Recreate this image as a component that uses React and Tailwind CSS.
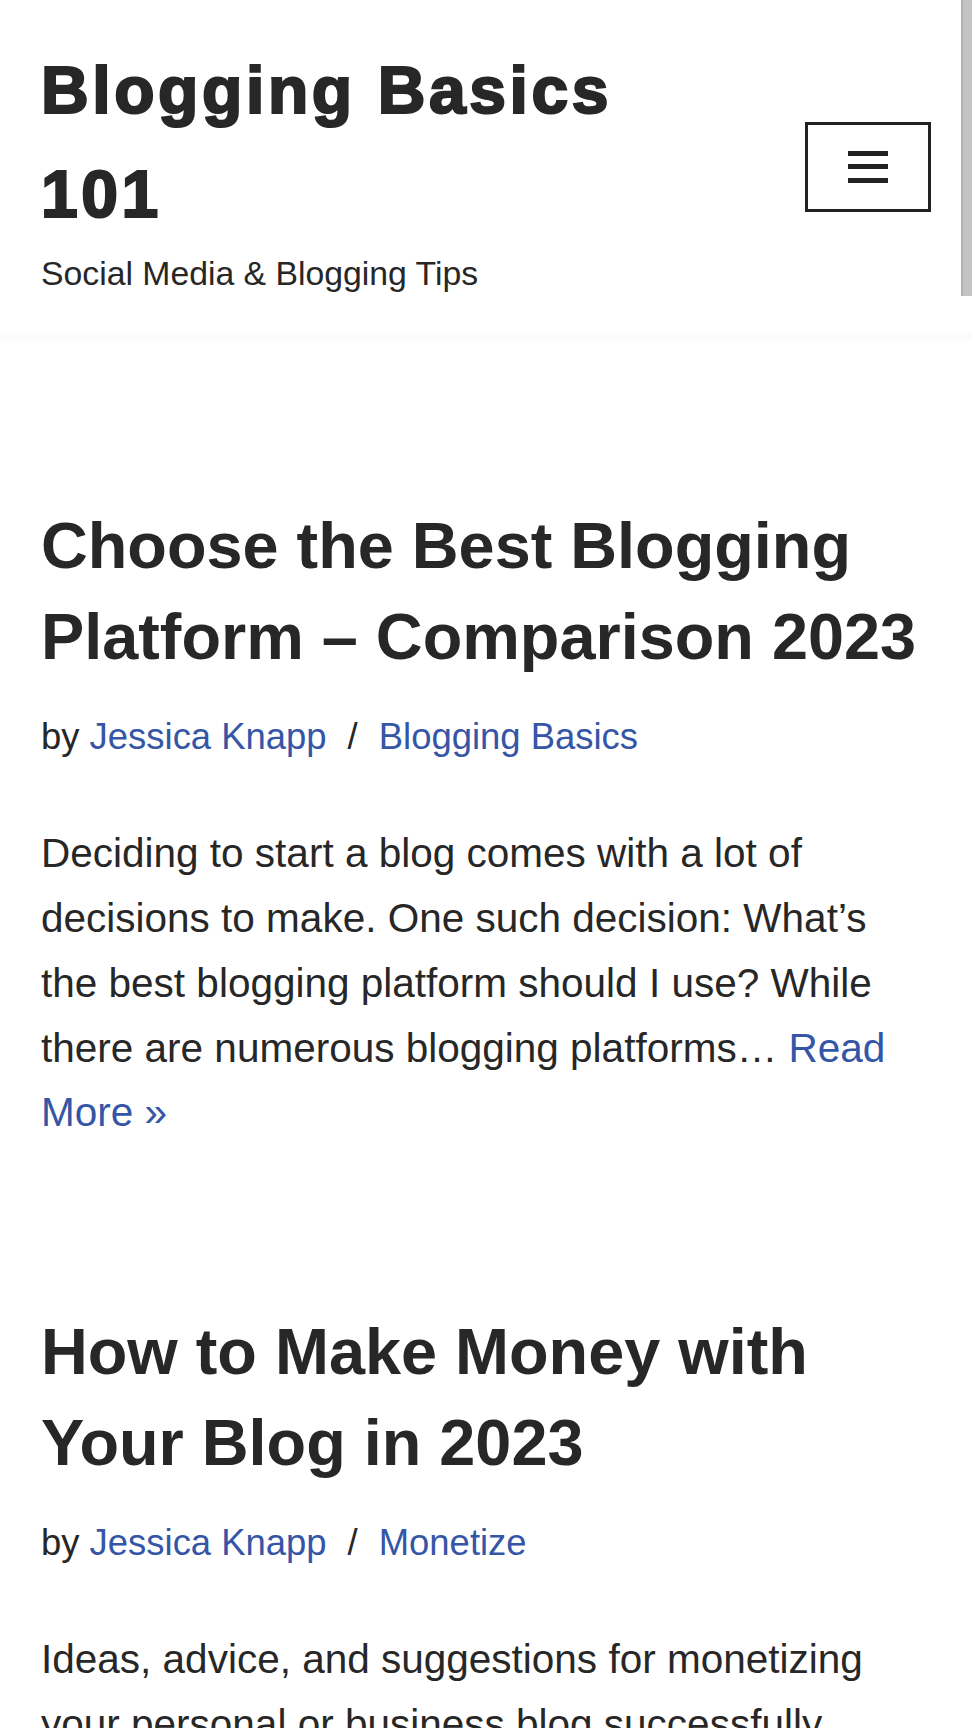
import React from 'react';

const posts = [
	{
		title: 'Choose the Best Blogging Platform – Comparison 2023',
		author: 'Jessica Knapp',
		category: 'Blogging Basics',
		excerpt:
			'Deciding to start a blog comes with a lot of decisions to make. One such decision: What’s the best blogging platform should I use? While there are numerous blogging platforms…',
	},
	{
		title: 'How to Make Money with Your Blog in 2023',
		author: 'Jessica Knapp',
		category: 'Monetize',
		excerpt:
			'Ideas, advice, and suggestions for monetizing your personal or business blog successfully. Learn which strategies work best and how to get started today…',
	},
];

const Header = () => {
	return (
		<header className="bg-white border-b-[8px] border-b-[#fbfbfb]">
			<div className="flex items-center justify-between px-[41px] pt-[39px] pb-[33px]">
				<div className="max-w-[620px]">
					<h1 className="text-[66px] leading-[103.7px] font-bold tracking-[3.6px] text-[#272727] [-webkit-text-stroke:2.2px_#272727]">
						Blogging Basics 101
					</h1>
					<p className="text-[33.75px] leading-[54px] text-[#272727]">Social Media &amp; Blogging Tips</p>
				</div>
				<button
					className="mb-[6px] w-[126px] h-[90px] border-[3px] border-[#222222] bg-white flex flex-col items-center justify-center gap-[8.5px]"
					aria-label="Navigation Menu"
				>
					<span className="block w-[40px] h-[5px] bg-[#222222]"></span>
					<span className="block w-[40px] h-[5px] bg-[#222222]"></span>
					<span className="block w-[40px] h-[5px] bg-[#222222]"></span>
				</button>
			</div>
		</header>
	);
};

const Post = ({ post }) => {
	return (
		<article className="pt-[160px]">
			<h2 className="text-[64.8px] leading-[90.7px] font-bold text-[#272727]">{post.title}</h2>
			<div className="mt-[25px] text-[36.45px] leading-[58.3px] text-[#272727]">
				by <a className="text-[#3556a6]">{post.author}</a>
				<span className="mx-[21px]">/</span>
				<a className="text-[#3556a6]">{post.category}</a>
			</div>
			<p className="mt-[55px] text-[40.5px] leading-[64.8px] text-[#272727]">
				{post.excerpt} <a className="text-[#3556a6]">Read More »</a>
			</p>
		</article>
	);
};

export default function App() {
	return (
		<div className="relative min-h-screen bg-white font-['Liberation_Sans',Arial,sans-serif]">
			<Header />
			<main className="px-[41px] pb-[160px] [&>article+article]:pt-[162px]">
				{posts.map((post, index) => (
					<Post key={index} post={post} />
				))}
			</main>
			{/* scrollbar thumb seen in the screenshot */}
			<div className="absolute top-0 right-0 w-[11px] h-[296px] bg-[#c4c4c4] border-l-[2px] border-l-[#b3b3b3]"></div>
		</div>
	);
}
